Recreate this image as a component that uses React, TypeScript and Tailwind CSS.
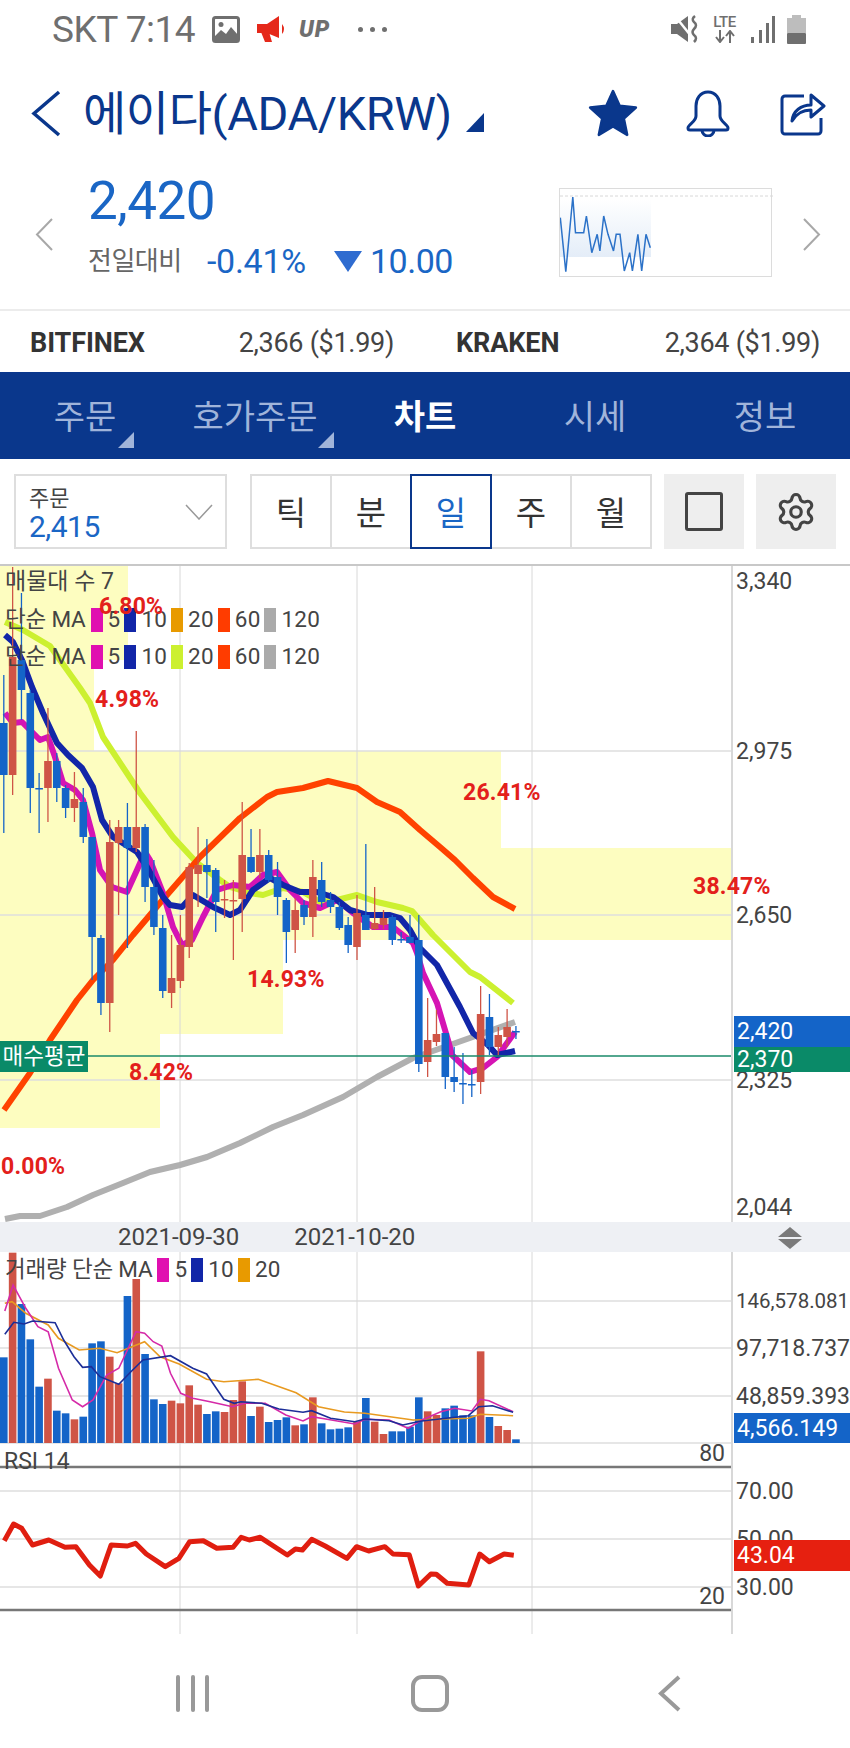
import { Settings } from 'lucide-react';

type Candle = [number, number, number, number, number]; // up, wickTop, bodyTop, bodyBottom, wickBottom

const BLUE = '#1464c8';
const RED = '#cf5446';
const NAVY = '#0a378c';

const candles: Candle[] = [
  [0, 675, 723, 775, 833], [1, 567, 657, 775, 795], [0, 593, 660, 690, 720], [0, 690, 693, 788, 813],
  [0, 773, 788, 789, 833], [1, 708, 761, 788, 822], [0, 753, 761, 788, 802], [0, 785, 788, 808, 818],
  [1, 772, 799, 808, 822], [0, 788, 802, 837, 843], [0, 837, 837, 937, 980], [0, 935, 938, 1003, 1015],
  [1, 820, 842, 1003, 1032], [1, 820, 827, 843, 915], [0, 803, 827, 848, 948], [1, 731, 827, 848, 852],
  [0, 824, 827, 887, 902], [0, 860, 887, 927, 935], [0, 915, 928, 991, 998], [1, 935, 978, 993, 1008],
  [1, 915, 945, 981, 988], [1, 863, 867, 947, 958], [1, 827, 865, 874, 907], [0, 839, 865, 872, 898],
  [0, 868, 870, 902, 932], [1, 880, 899, 900, 918], [1, 880, 900, 901, 960], [1, 802, 855, 899, 932],
  [0, 829, 857, 872, 873], [1, 829, 855, 872, 878], [0, 850, 855, 880, 882], [0, 862, 877, 897, 915],
  [0, 898, 900, 932, 963], [1, 898, 910, 930, 953], [0, 900, 905, 917, 925], [1, 860, 877, 917, 937],
  [0, 862, 880, 902, 907], [0, 892, 900, 907, 913], [0, 902, 907, 928, 930], [0, 917, 925, 945, 953],
  [1, 895, 913, 947, 960], [0, 844, 915, 930, 930], [1, 887, 923, 929, 930], [1, 910, 918, 925, 929],
  [0, 915, 917, 940, 945], [0, 932, 939, 940, 943], [0, 915, 937, 943, 943], [0, 915, 940, 1064, 1072],
  [1, 998, 1040, 1062, 1077], [1, 1010, 1034, 1042, 1046], [0, 1033, 1033, 1077, 1089], [0, 1047, 1077, 1082, 1092],
  [0, 1053, 1083, 1084, 1104], [0, 1070, 1084, 1085, 1097], [1, 986, 1014, 1082, 1094], [0, 994, 1017, 1047, 1055],
  [1, 1027, 1035, 1047, 1055], [1, 1009, 1027, 1037, 1047], [0, 1026, 1031, 1032, 1039],
];

const ma120 = '5,1219 20,1216 40,1216 67,1207 93,1195 123,1183 150,1172 180,1165 207,1157 240,1143 273,1127 303,1115 343,1097 377,1077 413,1058 450,1045 515,1022';
const ma60 = '4,1110 30,1073 50,1040 77,1000 93,980 113,960 133,935 160,903 180,880 200,857 240,818 267,797 277,792 303,788 328,781 357,788 377,802 400,812 420,830 440,847 455,860 473,878 493,897 515,909';
const ma20 = '5,622 23,630 50,646 80,688 90,703 103,737 140,793 173,837 197,863 220,880 230,887 250,893 263,895 283,888 303,892 320,902 337,900 357,895 377,902 403,908 412,911 433,935 470,972 480,977 513,1003';
const ma10 = '5,635 13,642 22,660 32,687 43,713 57,743 68,755 82,768 93,787 102,820 113,837 137,852 147,867 163,897 170,905 182,907 193,895 213,907 230,915 240,910 253,890 270,878 283,885 300,892 317,892 333,897 350,910 367,915 390,915 400,918 410,930 420,948 437,965 460,1007 473,1033 488,1045 497,1055 515,1051';
const ma5 = '5,713 13,723 22,722 33,733 40,740 48,737 55,757 63,783 75,790 83,800 92,833 100,870 112,887 127,892 137,870 145,852 150,860 163,893 173,927 182,945 192,940 203,917 217,890 233,885 250,887 263,875 277,872 290,890 303,903 320,908 337,900 353,913 373,927 393,927 413,943 417,953 423,973 437,1003 448,1040 452,1055 470,1072 483,1068 497,1057 515,1032';

// volume bars: up flag and top edge, read off the 3x crop
const volumes: [number, number][] = [
  [0, 352], [1, 38], [0, 192], [0, 298], [0, 440], [1, 416], [0, 512], [0, 520], [1, 538], [0, 530],
  [0, 310], [0, 304], [1, 350], [1, 430], [0, 168], [1, 117], [0, 342], [0, 478], [0, 492], [1, 482],
  [1, 490], [1, 436], [1, 494], [0, 522], [0, 514], [1, 516], [1, 480], [1, 424], [0, 528], [1, 500],
  [0, 546], [0, 540], [0, 532], [1, 556], [0, 553], [1, 472], [0, 550], [0, 568], [0, 566], [0, 562],
  [1, 545], [0, 474], [1, 545], [1, 582], [0, 574], [0, 574], [0, 560], [0, 472], [1, 514], [1, 525],
  [0, 505], [0, 497], [0, 526], [0, 526], [1, 334], [0, 531], [1, 558], [1, 570], [0, 598],
];

const toVol = (pts: number[][]) => pts.map(([x, y]) => `${(x / 2.904).toFixed(1)},${(1240 + y / 3).toFixed(1)}`).join(' ');

const vol5 = toVol([[14, 213], [38, 135], [75, 205], [110, 260], [140, 275], [170, 385], [210, 480], [240, 500], [270, 480], [310, 405], [345, 385], [395, 275], [420, 280], [445, 305], [470, 318], [495, 400], [525, 460], [560, 475], [610, 485], [675, 500], [710, 490], [770, 490], [830, 525], [880, 543], [905, 530], [950, 538], [1030, 552], [1060, 538], [1130, 540], [1185, 565], [1225, 540], [1280, 515], [1320, 505], [1370, 513], [1395, 478], [1420, 482], [1490, 515]]);
const vol10 = toVol([[14, 283], [40, 247], [70, 252], [95, 243], [160, 248], [185, 300], [215, 350], [240, 382], [265, 380], [290, 410], [345, 433], [380, 395], [415, 360], [495, 347], [560, 385], [600, 402], [650, 478], [680, 490], [700, 485], [760, 490], [810, 507], [880, 517], [905, 512], [960, 535], [1030, 545], [1060, 537], [1130, 542], [1170, 555], [1200, 548], [1225, 543], [1360, 527], [1390, 500], [1430, 497], [1490, 517]]);
const vol20 = toVol([[14, 190], [35, 185], [75, 220], [140, 255], [170, 295], [230, 330], [290, 325], [340, 338], [420, 305], [465, 350], [520, 372], [600, 418], [650, 425], [750, 418], [860, 458], [925, 500], [1000, 516], [1060, 520], [1200, 540], [1360, 535], [1395, 523], [1490, 527]]);

const rsi = [[8, 272], [25, 222], [40, 235], [60, 285], [90, 270], [120, 292], [140, 290], [165, 345], [185, 378], [205, 285], [235, 288], [250, 280], [270, 312], [305, 350], [330, 325], [350, 275], [375, 272], [400, 295], [430, 292], [445, 262], [460, 270], [480, 262], [530, 315], [545, 297], [558, 300], [575, 268], [600, 288], [640, 325], [658, 290], [680, 303], [710, 290], [725, 312], [755, 314], [772, 408], [795, 372], [805, 373], [825, 400], [865, 405], [885, 312], [903, 335], [930, 312], [948, 316]]
  .map(([x, y]) => `${(x / 1.845).toFixed(1)},${(1450 + y / 3).toFixed(1)}`)
  .join(' ');

const spark = [[1032, 650], [1042, 812], [1055, 588], [1060, 695], [1075, 695], [1080, 645], [1090, 755], [1100, 700], [1105, 750], [1112, 645], [1120, 700], [1130, 750], [1135, 700], [1142, 700], [1150, 810], [1160, 755], [1165, 810], [1175, 700], [1182, 810], [1190, 700], [1198, 740]]
  .map(([x, y]) => `${(x / 1.845 - 559).toFixed(1)},${(y / 3 - 188).toFixed(1)}`)
  .join(' ');

const percents = [
  { text: '6.80%', x: 99, y: 606 },
  { text: '4.98%', x: 95, y: 699 },
  { text: '26.41%', x: 463, y: 792 },
  { text: '38.47%', x: 693, y: 886 },
  { text: '14.93%', x: 247, y: 979 },
  { text: '8.42%', x: 129, y: 1072 },
  { text: '0.00%', x: 1, y: 1166 },
];

const tabs = ['틱', '분', '일', '주', '월'];

function Legend({ label, items, className }: { label: string; items: [string, string][]; className: string }) {
  return (
    <div className={`absolute left-[5px] flex h-[24px] items-center text-[22.5px] text-[#444] ${className}`}>
      <span className="mr-[1px] tracking-[-0.2px]">{label}</span>
      {items.map(([color, num]) => (
        <span key={num + color} className="ml-[4px] flex items-center">
          <i className="h-[24px] w-[12px]" style={{ background: color }} />
          <span className="ml-[5px] tracking-[0.2px]">{num}</span>
        </span>
      ))}
    </div>
  );
}

function AxisLabel({ y, top, text, small }: { y: number; top: number; text: string; small?: boolean }) {
  return (
    <span
      className={`absolute left-[3px] -translate-y-1/2 leading-none whitespace-nowrap text-[#444] ${small ? 'text-[20.5px]' : 'text-[23px]'}`}
      style={{ top: y - top }}
    >
      {text}
    </span>
  );
}

function Grid({ top, height, lines }: { top: number; height: number; lines: number[] }) {
  return (
    <>
      {lines.map((y) => (
        <line key={y} x1="0" x2="731" y1={y} y2={y} stroke="#dedede" strokeWidth="1.5" />
      ))}
      {[180, 357, 532].map((x) => (
        <line key={x} x1={x} x2={x} y1={top} y2={top + height} stroke="#d8d8d8" strokeWidth="1" />
      ))}
    </>
  );
}

function StatusBar() {
  return (
    <div className="flex h-[58px] items-center pl-[52px] text-[#6f6f6f]">
      <span className="w-[141px] text-[37px] leading-none tracking-[-0.5px] whitespace-nowrap">SKT 7:14</span>
      <svg className="ml-[19px]" width="28" height="27" viewBox="0 0 28 27">
        <rect x="1.5" y="1.5" width="25" height="24" rx="2" fill="none" stroke="#6f6f6f" strokeWidth="3" />
        <circle cx="9" cy="8.5" r="2.5" fill="#6f6f6f" />
        <path d="M2 24 V21 L9 14 L14 18 L19 11 L26 19 V25 H2 Z" fill="#6f6f6f" />
      </svg>
      <svg className="ml-[17px]" width="29" height="27" viewBox="0 0 29 27">
        <path d="M0 8 H10 L22 0 V22 L10 17 H0 Z M4 16 H12 L15 26 H8 Z" fill="#e5281a" />
        <path d="M25 8 Q29 13 25 18 Z" fill="#e5281a" />
      </svg>
      <span className="ml-[13px] w-[34px] text-[23px] leading-none font-black tracking-[1px] whitespace-nowrap text-[#6f6f6f] italic">UP</span>
      <span className="ml-[25px] flex gap-[7px]">
        <i className="h-[5px] w-[5px] rounded-full bg-[#6f6f6f]" />
        <i className="h-[5px] w-[5px] rounded-full bg-[#6f6f6f]" />
        <i className="h-[5px] w-[5px] rounded-full bg-[#6f6f6f]" />
      </span>
      <svg className="ml-[284px]" width="28" height="28" viewBox="0 0 28 28">
        <path d="M0 9 H6 L17 1 V27 L6 19 H0 Z" fill="#6f6f6f" />
        <path d="M4 1 L20 21" stroke="#fff" strokeWidth="2.5" />
        <path d="M24 1 Q20 4 23 7 Q27 10 23 14 Q20 17 23 20 Q27 23 23 27" fill="none" stroke="#6f6f6f" strokeWidth="2.5" />
      </svg>
      <div className="ml-[12px] flex w-[27px] flex-col items-center leading-none">
        <span className="text-[15px] leading-[15px] font-medium tracking-[-0.5px] whitespace-nowrap">LTE</span>
        <svg width="22" height="13" viewBox="0 0 22 13">
          <path d="M6 0 V11 M2 7 L6 12 L10 7 M16 13 V2 M12 6 L16 1 L20 6" fill="none" stroke="#6f6f6f" strokeWidth="2" />
        </svg>
      </div>
      <svg className="ml-[13px]" width="24" height="27" viewBox="0 0 24 27">
        <rect x="0" y="21" width="3" height="6" fill="#6f6f6f" />
        <rect x="8" y="14" width="3" height="13" fill="#6f6f6f" />
        <rect x="15" y="7" width="3" height="20" fill="#6f6f6f" />
        <rect x="21" y="0" width="3" height="27" fill="#6f6f6f" />
      </svg>
      <svg className="ml-[12px]" width="19" height="29" viewBox="0 0 19 29">
        <rect x="5" y="0" width="9" height="4" fill="#bdbdbd" />
        <rect x="0" y="3" width="19" height="15" fill="#bdbdbd" />
        <rect x="0" y="18" width="19" height="11" rx="1" fill="#6f6f6f" />
      </svg>
    </div>
  );
}

function Header() {
  return (
    <div className="flex h-[110px] items-center pl-[31px]">
      <svg width="30" height="47" viewBox="0 0 30 47">
        <polyline points="28,2 3,23.5 28,45" fill="none" stroke={NAVY} strokeWidth="3.5" />
      </svg>
      <h1 className="ml-[22px] w-[367px] text-[47px] leading-none tracking-[-0.4px] whitespace-nowrap text-[#0a378c]">에이다(ADA/KRW)</h1>
      <i className="mt-[18px] ml-[16px] h-0 w-0 border-b-[19px] border-l-[18px] border-b-[#0a378c] border-l-transparent" />
      <svg className="ml-[104px]" width="50" height="48" viewBox="0 0 24 23">
        <path d="M12 1 L15.2 8 L23 8.9 L17.2 14.2 L18.8 22 L12 18 L5.2 22 L6.8 14.2 L1 8.9 L8.8 8 Z" fill={NAVY} stroke={NAVY} strokeWidth="1.2" strokeLinejoin="round" />
      </svg>
      <svg className="ml-[48px]" width="44" height="47" viewBox="0 0 44 47" fill="none" stroke={NAVY} strokeWidth="3">
        <path d="M22 2 C14 2 10 9 10 16 V26 C10 32 2 34 2 38 Q2 40 4 40 H40 Q42 40 42 38 C42 34 34 32 34 26 V16 C34 9 30 2 22 2 Z" />
        <path d="M16 40 a6 6 0 0 0 12 0" />
      </svg>
      <svg className="ml-[50px]" width="46" height="46" viewBox="0 0 46 46" fill="none" stroke={NAVY} strokeWidth="3">
        <path d="M24 6 H5 a3 3 0 0 0 -3 3 V41 a3 3 0 0 0 3 3 H38 a3 3 0 0 0 3 -3 V28" />
        <path d="M12 31 C13 21 21 15 31 15 V5 L44 16 L31 27 V20 C23 20 16 24 12 31 Z" strokeLinejoin="round" />
      </svg>
    </div>
  );
}

function PriceRow() {
  return (
    <div className="flex h-[143px] items-start border-b-2 border-[#ececec] pt-[8px] pl-[35px]">
      <svg className="mt-[42px]" width="18" height="33" viewBox="0 0 18 33">
        <polyline points="17,1 2,16.5 17,32" fill="none" stroke="#a8a8a8" strokeWidth="2" />
      </svg>
      <div className="ml-[35px] flex w-[471px] flex-col">
        <span className="h-[50px] text-[53px] leading-[50px] tracking-[-0.5px] text-[#1a66c5]">2,420</span>
        <div className="mt-[20px] flex h-[30px] items-center">
          <span className="w-[96px] text-[26px] tracking-[-0.5px] whitespace-nowrap text-[#666]">전일대비</span>
          <span className="ml-[23px] w-[99px] text-[34px] tracking-[-0.3px] whitespace-nowrap text-[#1a66c5]">-0.41%</span>
          <i className="mt-[1px] ml-[28px] h-0 w-0 border-x-[14px] border-t-[21px] border-x-transparent border-t-[#2f6cd0]" />
          <span className="ml-[8px] text-[34px] tracking-[-0.5px] text-[#1a66c5]">10.00</span>
        </div>
      </div>
      <div className="relative mt-[12px] h-[89px] w-[213px] border border-[#dcdcdc]">
        <svg className="absolute inset-0" width="213" height="89" viewBox="0 0 213 89">
          <defs>
            <linearGradient id="sparkFill" x1="0" y1="0" x2="0" y2="1">
              <stop offset="0" stopColor="#ffffff" />
              <stop offset="1" stopColor="#e4edf8" />
            </linearGradient>
          </defs>
          <rect x="0" y="10" width="91" height="58" fill="url(#sparkFill)" />
          <line x1="0" x2="213" y1="7" y2="7" stroke="#d8d8d8" strokeDasharray="3 2" />
          <polyline points={spark} fill="none" stroke="#2c72c8" strokeWidth="1.5" />
        </svg>
      </div>
      <svg className="mt-[42px] ml-[31px]" width="18" height="33" viewBox="0 0 18 33">
        <polyline points="1,1 16,16.5 1,32" fill="none" stroke="#a8a8a8" strokeWidth="2" />
      </svg>
    </div>
  );
}

function Exchanges() {
  return (
    <div className="flex h-[61px] items-center gap-[62px] px-[30px] pt-[3px] text-[27px] tracking-[-0.3px] text-[#444]">
      <div className="flex w-[364px] items-center justify-between">
        <b className="text-[27px] tracking-[-0.1px] text-[#333]">BITFINEX</b>
        <span>2,366 ($1.99)</span>
      </div>
      <div className="flex w-[364px] items-center justify-between">
        <b className="text-[27px] tracking-[-0.1px] text-[#333]">KRAKEN</b>
        <span>2,364 ($1.99)</span>
      </div>
    </div>
  );
}

function NavTabs() {
  return (
    <div className="grid h-[87px] grid-cols-5 bg-[#0a378c] text-[34px] text-[#a0b4da]">
      <div className="relative flex items-center justify-center pt-[4px]">
        주문
        <i className="absolute top-[60px] left-[118px] h-0 w-0 border-b-[16px] border-l-[16px] border-b-[#a0b4da] border-l-transparent" />
      </div>
      <div className="relative flex items-center justify-center pt-[4px]">
        호가주문
        <i className="absolute top-[60px] left-[148px] h-0 w-0 border-b-[16px] border-l-[16px] border-b-[#a0b4da] border-l-transparent" />
      </div>
      <div className="flex items-center justify-center pt-[4px] font-bold text-white">차트</div>
      <div className="flex items-center justify-center pt-[4px]">시세</div>
      <div className="flex items-center justify-center pt-[4px]">정보</div>
    </div>
  );
}

function Toolbar() {
  return (
    <div className="flex h-[105px] items-center px-[14px]">
      <div className="flex h-[75px] w-[213px] items-center justify-between border-2 border-[#dedede] pr-[12px] pl-[13px]">
        <div className="flex flex-col pt-[6px]">
          <span className="text-[22px] leading-[25px] text-[#444]">주문</span>
          <span className="text-[30px] leading-[32px] tracking-[-0.5px] text-[#1a66c5]">2,415</span>
        </div>
        <svg width="28" height="16" viewBox="0 0 28 16">
          <polyline points="1,1 14,15 27,1" fill="none" stroke="#999" strokeWidth="1.5" />
        </svg>
      </div>
      <div className="ml-[23px] flex h-[75px] w-[402px] border-2 border-[#dedede]">
        {tabs.map((t) => (
          <div
            key={t}
            className={
              t === '일'
                ? 'z-10 -my-[2px] -ml-[2px] flex w-[82px] items-center justify-center border-2 border-[#0a378c] pt-[4px] text-[33px] text-[#1a66c5]'
                : 'flex flex-1 items-center justify-center border-r-2 border-[#dedede] pt-[4px] text-[33px] text-[#333] last:border-r-0'
            }
          >
            {t}
          </div>
        ))}
      </div>
      <div className="ml-[12px] flex h-[75px] w-[80px] items-center justify-center bg-[#eeeeee]">
        <i className="h-[39px] w-[38px] rounded-[3px] border-[3px] border-[#444]" />
      </div>
      <div className="ml-[12px] flex h-[75px] w-[80px] items-center justify-center bg-[#eeeeee]">
        <Settings size={42} strokeWidth={1.8} color="#444" />
      </div>
    </div>
  );
}

function MainChart() {
  return (
    <div className="flex h-[656px]">
      <div className="relative w-[731px]">
        <svg className="absolute inset-0" width="731" height="656" viewBox="0 566 731 656">
          <g fill="#fdfdc0">
            <rect x="0" y="566" width="128" height="94" />
            <rect x="0" y="660" width="94" height="91" />
            <rect x="0" y="751" width="501" height="97" />
            <rect x="0" y="848" width="731" height="92" />
            <rect x="0" y="940" width="283" height="94" />
            <rect x="0" y="1034" width="160" height="94" />
          </g>
          <Grid top={566} height={656} lines={[751, 915, 1080]} />
          <g fill="none" strokeWidth="6" strokeLinejoin="round">
            <polyline points={ma120} stroke="#b0b0b0" />
            <polyline points={ma20} stroke="#ccf030" />
            <polyline points={ma60} stroke="#ff4200" />
            <polyline points={ma5} stroke="#d514b4" />
            <polyline points={ma10} stroke="#1226a8" />
          </g>
          {candles.map(([up, wt, bt, bb, wb], i) => {
            const cx = 3.8 + 8.83 * i;
            const color = up ? RED : BLUE;
            return (
              <g key={i}>
                <line x1={cx} x2={cx} y1={wt} y2={wb} stroke={color} strokeWidth="1.3" />
                <rect x={cx - 3.8} y={bt} width="7.6" height={Math.max(bb - bt, 1.5)} fill={color} />
              </g>
            );
          })}
          <line x1="88" x2="731" y1="1056" y2="1056" stroke="#1a8a6a" strokeWidth="1.5" />
        </svg>
        <span className="absolute top-[1px] left-[5px] text-[23px] leading-[30px] text-[#444]">매물대 수 7</span>
        <Legend
          label="단순 MA"
          className="top-[42px]"
          items={[['#e010b0', '5'], ['#1226a8', '10'], ['#e89a00', '20'], ['#ff3c00', '60'], ['#aaaaaa', '120']]}
        />
        <Legend
          label="단순 MA"
          className="top-[79px]"
          items={[['#e010b0', '5'], ['#1226a8', '10'], ['#ccf030', '20'], ['#ff3c00', '60'], ['#aaaaaa', '120']]}
        />
        {percents.map((p) => (
          <span
            key={p.text}
            className="absolute z-10 -translate-y-1/2 text-[23px] leading-none font-bold tracking-[0.2px] whitespace-nowrap text-[#e3201b]"
            style={{ left: p.x, top: p.y - 566 }}
          >
            {p.text}
          </span>
        ))}
        <span className="absolute top-[475px] left-0 flex h-[31px] w-[88px] items-center justify-center bg-[#0a8a68] text-[22.5px] whitespace-nowrap text-white">
          매수평균
        </span>
      </div>
      <div className="relative flex-1 border-l-2 border-[#d8d8d8]">
        <AxisLabel y={581} top={566} text="3,340" />
        <AxisLabel y={751} top={566} text="2,975" />
        <AxisLabel y={915} top={566} text="2,650" />
        <AxisLabel y={1080} top={566} text="2,325" />
        <AxisLabel y={1207} top={566} text="2,044" />
        <span className="absolute top-[450px] right-0 left-[1px] flex h-[31px] items-center bg-[#1464c8] pl-[3px] text-[23px] leading-none text-white">2,420</span>
        <span className="absolute top-[481px] right-0 left-[1px] flex h-[25px] items-center bg-[#0a8a68] pl-[3px] text-[23px] leading-none text-white">2,370</span>
      </div>
    </div>
  );
}

function DateStrip() {
  return (
    <div className="relative flex h-[30px] items-center bg-[#eef0f4] pl-[118px] text-[24px] text-[#444]">
      <span>2021-09-30</span>
      <span className="ml-[55px]">2021-10-20</span>
      <svg className="absolute top-[5px] left-[778px]" width="24" height="22" viewBox="0 0 24 22">
        <path d="M12 0 L24 10 H0 Z" fill="#7a7a7a" />
        <path d="M0 12 H24 L12 22 Z" fill="#7a7a7a" />
      </svg>
    </div>
  );
}

function VolumeChart() {
  return (
    <div className="flex h-[217px]">
      <div className="relative w-[731px]">
        <svg className="absolute inset-0" width="731" height="217" viewBox="0 1252 731 217">
          <Grid top={1252} height={217} lines={[1301, 1348, 1396, 1443]} />
          {volumes.map(([up, top], i) => {
            const y = 1240 + top / 3;
            return <rect key={i} x={8.83 * i} y={y} width="7.6" height={1443 - y} fill={up ? RED : BLUE} />;
          })}
          <g fill="none" strokeWidth="1.6">
            <polyline points={vol20} stroke="#e89a20" />
            <polyline points={vol5} stroke="#d52aa8" />
            <polyline points={vol10} stroke="#1c2e98" />
          </g>
          <line x1="0" x2="731" y1="1467" y2="1467" stroke="#777" strokeWidth="2.5" />
        </svg>
        <Legend label="거래량 단순 MA" className="top-[6px]" items={[['#e010b0', '5'], ['#1226a8', '10'], ['#e89a00', '20']]} />
        <span className="absolute top-[198px] left-[4px] text-[23px] leading-none text-[#444]">RSI 14</span>
        <span className="absolute top-[190px] right-[6px] text-[23px] leading-none text-[#444]">80</span>
      </div>
      <div className="relative flex-1 border-l-2 border-[#d8d8d8]">
        <AxisLabel y={1301} top={1252} text="146,578.081" small />
        <AxisLabel y={1348} top={1252} text="97,718.737" />
        <AxisLabel y={1396} top={1252} text="48,859.393" />
        <span className="absolute top-[161px] right-0 left-[1px] flex h-[30px] items-center bg-[#1464c8] pl-[3px] text-[23px] leading-none text-white">4,566.149</span>
      </div>
    </div>
  );
}

function RsiChart() {
  return (
    <div className="flex h-[165px]">
      <div className="relative w-[731px]">
        <svg className="absolute inset-0" width="731" height="165" viewBox="0 1469 731 165">
          <Grid top={1469} height={165} lines={[1491, 1539, 1587]} />
          <polyline points={rsi} fill="none" stroke="#e01e10" strokeWidth="5" strokeLinejoin="round" />
          <line x1="0" x2="731" y1="1610" y2="1610" stroke="#777" strokeWidth="2.5" />
        </svg>
        <span className="absolute top-[116px] right-[6px] text-[23px] leading-none text-[#444]">20</span>
      </div>
      <div className="relative flex-1 border-l-2 border-[#d8d8d8]">
        <AxisLabel y={1491} top={1469} text="70.00" />
        <AxisLabel y={1539} top={1469} text="50.00" />
        <AxisLabel y={1587} top={1469} text="30.00" />
        <span className="absolute top-[71px] right-0 left-[1px] flex h-[31px] items-center bg-[#e62010] pl-[3px] text-[23px] leading-none text-white">43.04</span>
      </div>
    </div>
  );
}

function BottomNav() {
  return (
    <div className="flex h-[114px] items-start pt-[41px] pl-[176px]">
      <div className="flex h-[37px] w-[33px] justify-between">
        <i className="w-[4px] rounded-sm bg-[#999]" />
        <i className="w-[4px] rounded-sm bg-[#999]" />
        <i className="w-[4px] rounded-sm bg-[#999]" />
      </div>
      <i className="ml-[202px] h-[37px] w-[38px] rounded-[11px] border-[4.5px] border-[#999]" />
      <svg className="ml-[208px]" width="24" height="37" viewBox="0 0 24 37">
        <polyline points="22,2 4,18.5 22,35" fill="none" stroke="#999" strokeWidth="4" />
      </svg>
    </div>
  );
}

function App() {
  return (
    <div className="h-[1748px] w-[850px] overflow-hidden bg-white font-[Roboto,'Noto_Sans_CJK_KR',sans-serif]">
      <StatusBar />
      <Header />
      <PriceRow />
      <Exchanges />
      <NavTabs />
      <Toolbar />
      <div className="border-t-2 border-[#c8c8c8]">
        <MainChart />
        <DateStrip />
        <VolumeChart />
        <RsiChart />
      </div>
      <BottomNav />
    </div>
  );
}

export default App;
